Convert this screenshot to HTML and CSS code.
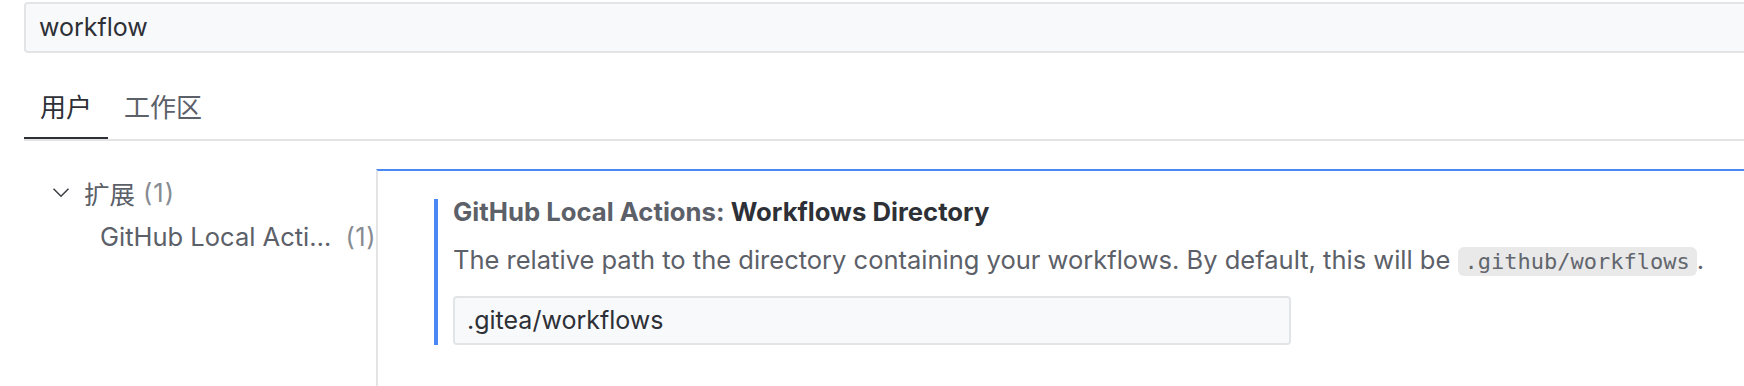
FILE: index.html
```html
<!DOCTYPE html>
<html lang="zh-CN">
<head>
	<meta charset="UTF-8">
	<title>设置</title>
	<link rel="stylesheet" href="styles.css">
</head>
<body>
	<div class="search">workflow</div>

	<div class="tabs">
		<div class="tab active">用户</div>
		<div class="tab">工作区</div>
	</div>

	<div class="main">
		<div class="toc">
			<div class="row">
				<svg class="chevron" width="26" height="26" viewBox="0 0 16 16"><polyline points="3.4,6 8,10.6 12.6,6" fill="none" stroke="#3c3f44" stroke-width="0.95"/></svg>
				<span class="name">扩展</span>
				<span class="count">(1)</span>
			</div>
			<div class="row sub">
				<span class="name">GitHub Local Actions</span>
				<span class="count">(1)</span>
			</div>
		</div>

		<div class="panel">
			<div class="setting">
				<div class="title"><span class="cat">GitHub Local Actions: </span><span class="label">Workflows Directory</span></div>
				<div class="desc">The relative path to the directory containing your workflows. By default, this will be <code>.github/workflows</code>.</div>
				<div class="input">.gitea/workflows</div>
			</div>
		</div>
	</div>
</body>
</html>
```

FILE: styles.css
```css
*{margin: 0;padding: 0;box-sizing: border-box;}
body{
	background-color: #fff;
	font-family: Inter, "Noto Sans CJK SC", sans-serif;
	color: #5c6068;
	overflow: hidden;
	width: 1744px;
	height: 386px;
}
.search{
	margin: 2px -20px 0 24px;
	height: 51px;
	border: 2px solid #e3e4e6;
	border-radius: 4px;
	background-color: #f8f9fb;
	padding-left: 13px;
	font-size: 25px;
	line-height: 47px;
	color: #2d3036;
}
.tabs{
	display: flex;
	margin: 26px 0 0 24px;
	border-bottom: 2px solid #e4e4e7;
}
.tab{
	height: 60px;
	padding: 0 16px;
	font-size: 26px;
	line-height: 58px;
	border-bottom: 2px solid transparent;
	color: #5c6068;
}
.tab.active{
	color: #2d3036;
	border-bottom-color: #2d3036;
}
.main{
	display: flex;
	margin-left: 24px;
}
.toc{
	width: 352px;
	flex-shrink: 0;
	padding-top: 29px;
	font-size: 25.5px;
}
.row{
	display: flex;
	align-items: center;
	height: 44px;
	padding-left: 24px;
}
.row .chevron{
	margin-right: 10px;
	flex-shrink: 0;
}
.row .count{
	color: #878b92;
	margin-left: 8px;
	letter-spacing: 1px;
	flex-shrink: 0;
}
.row.sub{
	padding-left: 76px;
}
.row.sub .name{
	flex: 1;
	min-width: 0;
	white-space: nowrap;
	overflow: hidden;
	text-overflow: ellipsis;
}
.row.sub .count{
	margin-left: 10px;
	letter-spacing: 0.5px;
}
.panel{
	flex: 1;
	margin-top: 28px;
	height: 217px;
	border-top: 2px solid #4a89f3;
	border-left: 2px solid #e4e4e7;
}
.setting{
	margin: 28px 0 0 56px;
	border-left: 4px solid #4a89f3;
	padding-left: 15px;
	font-size: 25px;
}
.title{
	font-size: 25.7px;
	font-weight: 700;
	line-height: 26px;
}
.title .label{
	color: #2d3036;
}
.desc{
	margin-top: 20px;
	font-size: 25.5px;
	line-height: 30px;
}
code{
	font-family: "DejaVu Sans Mono", monospace;
	font-size: 22px;
	background-color: #e9e9ea;
	color: #62666d;
	border-radius: 6px;
	padding: 2px 7px;
}
.input{
	margin-top: 19px;
	width: 838px;
	height: 49px;
	border: 2px solid #e3e4e6;
	border-radius: 4px;
	background-color: #f8f9fb;
	padding-left: 12px;
	line-height: 45px;
	color: #2d3036;
}
```
